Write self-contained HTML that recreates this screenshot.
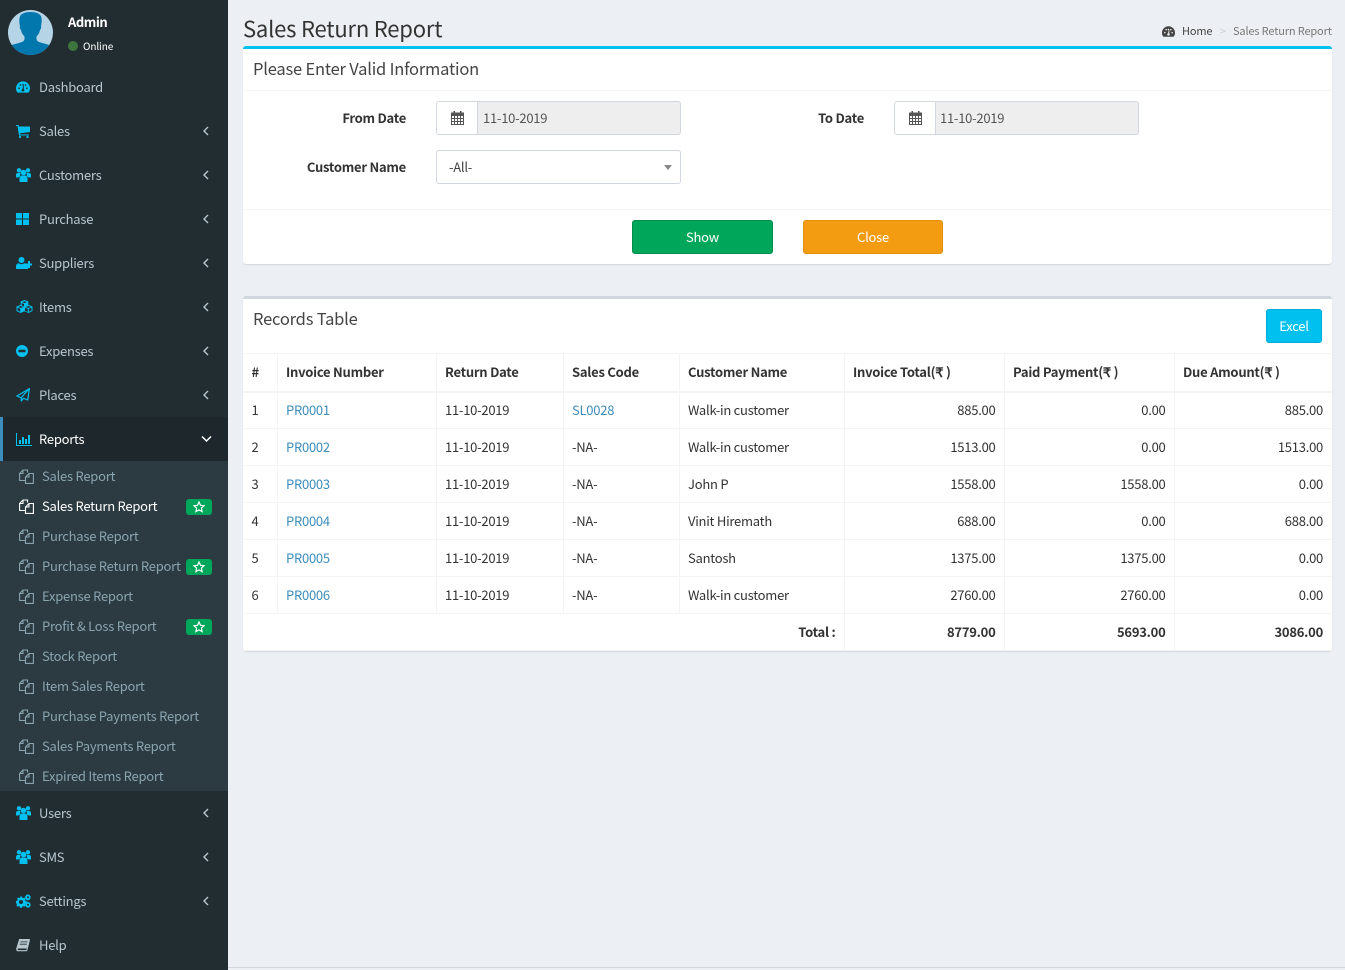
<!DOCTYPE html>
<html lang="en"><head><meta charset="utf-8"><title>Sales Return Report</title>
<style>
*{box-sizing:border-box}
html,body{margin:0;padding:0;width:1345px;height:970px;overflow:hidden;background:#ecf0f5}
body{position:relative;font-family:"Noto Sans CJK SC","Liberation Sans",sans-serif;font-size:13px;letter-spacing:-.25px;color:#333}
a{text-decoration:none}
.abs,.m,.s,.ic,.ch,.badge{position:absolute}
#side{position:absolute;left:0;top:0;width:228px;height:970px;background:#222d32}
.m{left:39px;line-height:20px;height:20px;color:#b8c7ce;white-space:nowrap}
.s{left:42px;line-height:20px;height:20px;color:#8aa4af;white-space:nowrap}
.ic{fill:#00c0ef}
.ch{left:202px;width:8px;height:10px;fill:none;stroke:#b8c7ce;stroke-width:1.4}
.sf{left:19px;width:15px;height:15px;fill:none;stroke:#8aa4af;stroke-width:1.1}
.badge{left:186px;width:26px;height:16px;background:#00a65a;border-radius:3px}
.badge svg{position:absolute;left:7px;top:2px;width:12px;height:12px;fill:none;stroke:#fff;stroke-width:1.2}
.t{position:absolute;white-space:nowrap;line-height:20px;height:20px}
.card{position:absolute;left:243px;width:1089px;background:#fff;border-radius:3px;box-shadow:0 1px 1px rgba(0,0,0,.1)}
.hl{position:absolute;left:243px;width:1089px;height:1px;background:#f4f4f4}
.lbl{position:absolute;font-weight:700;text-align:right;line-height:20px;color:#333;white-space:nowrap}
.grp{position:absolute;height:34px;width:245px;border:1px solid #d2d6de;border-radius:3px;background:#eee;color:#555;line-height:32px}
.grp i{position:absolute;left:0;top:0;width:41px;height:32px;background:#fff;border-right:1px solid #d2d6de;border-radius:2px 0 0 2px}
.grp svg{position:absolute;left:14px;top:9px;width:13px;height:14px;fill:#555}
.grp span{position:absolute;left:46px;top:0}
.btn{position:absolute;height:34px;color:#fff;text-align:center;line-height:32px;border-radius:3px;border:1px solid}
table{position:absolute;left:243px;top:353px;width:1089px;border-collapse:collapse;table-layout:fixed;color:#333;line-height:20px}
td,th{border:1px solid #f4f4f4;padding:0 8px 0 8.5px;height:37px;font-weight:400;text-align:left;white-space:nowrap;overflow:hidden}
th{font-weight:700;border-bottom-width:2px;height:38px}
tr>*:first-child{border-left:0}tr>*:last-child{border-right:0;padding-right:9px}
.r{text-align:right}.b{font-weight:700}
td a{color:#3c8dbc}
</style></head><body>
<svg width="0" height="0" style="position:absolute">
<defs>
<symbol id="gauge" viewBox="0 0 15 12"><path fill-rule="evenodd" d="M7.5 0C3.4 0 0 3.3 0 7.4c0 1.7.5 3.200 1.400 4.400.2.100.4.200.6.200h11c.2 0 .4-.1.600-.2.900-1.200 1.400-2.700 1.400-4.400C15 3.300 11.600 0 7.500 0zM3.300 8.200a.9.900 0 1 1 0-1.800.9.900 0 0 1 0 1.800zm1.500-3.400a.9.900 0 1 1 0-1.800.9.900 0 0 1 0 1.800zm3.600-1.100a.9.900 0 1 1-1.800 0 .9.900 0 0 1 1.800 0zM7.500 10.800a1.400 1.400 0 0 1-.6-2.700l.9-3.400h.8l-.3 3.500a1.400 1.400 0 0 1-.8 2.600zm2.700-6a.9.900 0 1 1 0-1.800.9.900 0 0 1 0 1.800zm1.500 3.400a.9.900 0 1 1 0-1.800.9.900 0 0 1 0 1.800z"/></symbol>
<symbol id="cart" viewBox="0 0 14 13"><path d="M0 0h2.500l.5 1.500H14v5.500L4 8.200l.3 1.300H13v1H3L1.500 1H0z"/><circle cx="4" cy="12" r="1.100"/><circle cx="11.500" cy="12" r="1.100"/></symbol>
<symbol id="users" viewBox="0 0 15 14"><circle cx="3" cy="2.300" r="2.200"/><circle cx="12" cy="2.300" r="2.200"/><circle cx="7.500" cy="4.500" r="2.800"/><path d="M0 9.500V6.500C0 5.500 1 5 2 5H4.500L4 8.500C3 9 2.800 9.300 2.500 9.500zM15 9.500V6.500C15 5.500 14 5 13 5H10.500L11 8.500C12 9 12.200 9.300 12.500 9.500zM3.500 14V10.500C3.500 8.500 5 7.500 6 7.500H9C10 7.500 11.500 8.500 11.500 10.500V14z"/></symbol>
<symbol id="grid" viewBox="0 0 13 12"><path d="M0 0h6v5.500H0zM7 0h6v5.500H7zM0 6.500h6V12H0zM7 6.500h6V12H7z"/></symbol>
<symbol id="uplus" viewBox="0 0 16 12"><circle cx="5.500" cy="3" r="3"/><path d="M0 12V9.500C0 7.500 1.300 6.300 2.800 6.300c.7.500 1.700.900 2.700.900s2-.4 2.700-.9c.7 0 1.400.3 1.900.8v1.400h2V12zM12 4h2v2.500h2v2h-2V11h-2V8.500H9.500v-2H12z"/></symbol>
<symbol id="cubes" viewBox="0 0 17 14"><path d="M8.500 0l3.800 1.400v3.400L16.500 6.500V11L12.500 13l-4-1.700L4.500 13 .5 11V6.500L4.700 4.800V1.400zM8.500 1.200L6 2.100l2.500.9 2.500-.9zM5.700 3v2.500L8 6.500V4zM4.700 6L2 7l2.700 1 2.600-1zM1.500 7.800v2.600l2.700 1.300V8.800zM12.300 6L9.700 7l2.600 1L15 7zM9 7.800v3l2.800 1.100V8.800zM15.500 7.800l-2.700 1v3l2.700-1.300z" fill-rule="evenodd"/></symbol>
<symbol id="minus" viewBox="0 0 12 12"><path fill-rule="evenodd" d="M6 0a6 6 0 1 1 0 12A6 6 0 0 1 6 0zM2.500 4.800v2.400h7V4.800z"/></symbol>
<symbol id="plane" viewBox="0 0 14 14"><path fill="none" stroke="#00c0ef" stroke-width="1.200" stroke-linejoin="round" d="M13.400.6L.8 8 5 9.800 13.400.6 11.700 12 7.500 10.200 5.300 13V9.800"/></symbol>
<symbol id="bars" viewBox="0 0 16 13"><path d="M0 0h1v12h15v1H0zM3 7h2v4H3zM6 4h2v7H6zM9 6h2v5H9zM12 2h2v9h-2z"/></symbol>
<symbol id="cogs" viewBox="0 0 15 14"><path fill-rule="evenodd" d="M4 2.500h2l.3 1.200.9.400 1.100-.6 1.300 1.300-.6 1.100.4.900 1.200.3v2l-1.200.3-.4.900.6 1.100-1.300 1.300-1.100-.6-.9.400-.3 1.200H4l-.3-1.200-.9-.4-1.100.6L.4 11.500l.6-1.100-.4-.9L0 9V7l1.200-.3.4-.9L1 4.700 2.300 3.400l1.100.6.900-.4zM5 6a2 2 0 1 0 0 4 2 2 0 0 0 0-4z"/><path fill-rule="evenodd" d="M12 0l.5.800h1l.4 1 .9.600-.4 1 .4 1-.9.500-.4 1h-1L12 6.700l-.8-.8h-1l-.4-1-.8-.5.300-1-.3-1 .8-.6.400-1h1zM12 2.300a1 1 0 1 0 0 2 1 1 0 0 0 0-2z"/><path fill-rule="evenodd" d="M12 7.500l.5.800h1l.4 1 .9.600-.4 1 .4 1-.9.500-.4 1h-1L12 14l-.8-.8h-1l-.4-1-.8-.5.300-1-.3-1 .8-.6.400-1h1zM12 9.800a1 1 0 1 0 0 2 1 1 0 0 0 0-2z"/></symbol>
<symbol id="book" viewBox="0 0 14 13"><path fill-rule="evenodd" d="M3 0h10.500l.5.700L11.500 11c-.2.800-.7 1.300-1.500 1.300H2c-1 0-1.800-.9-1.800-2.100 0-.3 0-.6.100-.9L3 .5zM4.500 2.500l-.2.800h7l.2-.8zM3.900 4.800l-.2.800h7l.2-.8zM2.500 9.500c-.6 0-.9.400-.9.800 0 .5.400.8.900.8H10c.3 0 .5-.2.600-.5l.3-1.100z"/></symbol>
<symbol id="cal" viewBox="0 0 13 14"><path fill-rule="evenodd" d="M2.500 0h1.500v1.500h5V0h1.500v1.500H13V14H0V1.500h2.500zM1 5v2h2V5zM4 5v2h2V5zM7 5v2h2V5zM10 5v2h2V5zM1 8v2h2V8zM4 8v2h2V8zM7 8v2h2V8zM10 8v2h2V8zM1 11v2h2v-2zM4 11v2h2v-2zM7 11v2h2v-2zM10 11v2h2v-2z"/></symbol>
<symbol id="files" viewBox="0 0 15 15"><path d="M8.500 3.500V1H4L.6 4.500V11.500H6.500M4 1.200V4.500H.6"/><path d="M6.500 8L10 4.500H14.400V14.400H6.500zM10 4.500V8H6.500"/></symbol>
<symbol id="star" viewBox="0 0 12 12"><path d="M6 1l1.500 3.300 3.500.4-2.600 2.400.7 3.500L6 8.900 2.900 10.600l.7-3.500L1 4.700l3.500-.4z"/></symbol>
<symbol id="left" viewBox="0 0 8 10"><path d="M6 1L2 5l4 4"/></symbol>
</defs></svg>

<div id="side">
<svg class="abs" style="left:8px;top:10px" width="45" height="45" viewBox="0 0 45 45"><defs><clipPath id="av"><circle cx="22.500" cy="22.500" r="22.500"/></clipPath></defs><g clip-path="url(#av)"><rect width="45" height="45" fill="#b5d5e6"/><path fill="#0277ae" d="M22.500 2C28 2 33 3.500 33.500 8C34 11 33.500 14 33 16C33.500 17 33 19 32 20C31.500 23 30 25 28.500 26.500C28.300 29 28.500 31 31 32C35 33.500 41 34.500 44 36L46 46L-1 46L1 36C4 34.500 10 33.500 14 32C16.500 31 16.700 29 16.500 26.500C15 25 13.500 23 13 20C12 19 11.500 17 12 16C11.500 14 11 11 11.500 8C12 3.500 17 2 22.500 2z"/></g></svg>
<div class="t" style="left:68px;top:12px;color:#fff;font-weight:700;letter-spacing:-.45px">Admin</div>
<div class="abs" style="left:68px;top:41px;width:10px;height:10px;border-radius:50%;background:#3c763d"></div>
<div class="t" style="left:83px;top:36px;color:#fff;font-size:10px;letter-spacing:-.1px">Online</div>

<svg class="ic" style="left:16px;top:81px" width="14" height="12"><use href="#gauge"/></svg><div class="m" style="top:77px">Dashboard</div>
<svg class="ic" style="left:16px;top:125px" width="14" height="13"><use href="#cart"/></svg><div class="m" style="top:121px">Sales</div><svg class="ch" style="top:126px"><use href="#left"/></svg>
<svg class="ic" style="left:16px;top:168px" width="15" height="14"><use href="#users"/></svg><div class="m" style="top:165px">Customers</div><svg class="ch" style="top:170px"><use href="#left"/></svg>
<svg class="ic" style="left:16px;top:213px" width="13" height="12"><use href="#grid"/></svg><div class="m" style="top:209px">Purchase</div><svg class="ch" style="top:214px"><use href="#left"/></svg>
<svg class="ic" style="left:16px;top:257px" width="16" height="12"><use href="#uplus"/></svg><div class="m" style="top:253px">Suppliers</div><svg class="ch" style="top:258px"><use href="#left"/></svg>
<svg class="ic" style="left:16px;top:300px" width="17" height="14"><use href="#cubes"/></svg><div class="m" style="top:297px">Items</div><svg class="ch" style="top:302px"><use href="#left"/></svg>
<svg class="ic" style="left:16px;top:345px" width="12" height="12"><use href="#minus"/></svg><div class="m" style="top:341px">Expenses</div><svg class="ch" style="top:346px"><use href="#left"/></svg>
<svg class="ic" style="left:16px;top:388px" width="14" height="14"><use href="#plane"/></svg><div class="m" style="top:385px">Places</div><svg class="ch" style="top:390px"><use href="#left"/></svg>

<div class="abs" style="left:0;top:417px;width:228px;height:44px;background:#1e282c;border-left:3px solid #3c8dbc"></div>
<svg class="ic" style="left:16px;top:433px" width="16" height="13"><use href="#bars"/></svg><div class="m" style="top:429px;color:#fff">Reports</div>
<svg class="abs" style="left:201px;top:435px" width="11" height="8" fill="none" stroke="#fff" stroke-width="1.500"><path d="M1 1.500l4.500 4.500L10 1.500"/></svg>

<div class="abs" style="left:0;top:461px;width:228px;height:330px;background:#2c3b41"></div>
<svg class="abs sf" style="top:469px"><use href="#files"/></svg><div class="s" style="top:466px">Sales Report</div>
<svg class="abs sf" style="top:499px;stroke:#fff"><use href="#files"/></svg><div class="s" style="top:496px;color:#fff">Sales Return Report</div><div class="badge" style="top:499px"><svg><use href="#star"/></svg></div>
<svg class="abs sf" style="top:529px"><use href="#files"/></svg><div class="s" style="top:526px">Purchase Report</div>
<svg class="abs sf" style="top:559px"><use href="#files"/></svg><div class="s" style="top:556px">Purchase Return Report</div><div class="badge" style="top:559px"><svg><use href="#star"/></svg></div>
<svg class="abs sf" style="top:589px"><use href="#files"/></svg><div class="s" style="top:586px">Expense Report</div>
<svg class="abs sf" style="top:619px"><use href="#files"/></svg><div class="s" style="top:616px">Profit &amp; Loss Report</div><div class="badge" style="top:619px"><svg><use href="#star"/></svg></div>
<svg class="abs sf" style="top:649px"><use href="#files"/></svg><div class="s" style="top:646px">Stock Report</div>
<svg class="abs sf" style="top:679px"><use href="#files"/></svg><div class="s" style="top:676px">Item Sales Report</div>
<svg class="abs sf" style="top:709px"><use href="#files"/></svg><div class="s" style="top:706px">Purchase Payments Report</div>
<svg class="abs sf" style="top:739px"><use href="#files"/></svg><div class="s" style="top:736px">Sales Payments Report</div>
<svg class="abs sf" style="top:769px"><use href="#files"/></svg><div class="s" style="top:766px">Expired Items Report</div>

<svg class="ic" style="left:16px;top:806px" width="15" height="14"><use href="#users"/></svg><div class="m" style="top:803px">Users</div><svg class="ch" style="top:808px"><use href="#left"/></svg>
<svg class="ic" style="left:16px;top:850px" width="15" height="14"><use href="#users"/></svg><div class="m" style="top:847px">SMS</div><svg class="ch" style="top:852px"><use href="#left"/></svg>
<svg class="ic" style="left:16px;top:894px" width="15" height="14"><use href="#cogs"/></svg><div class="m" style="top:891px">Settings</div><svg class="ch" style="top:896px"><use href="#left"/></svg>
<svg class="ic" style="left:16px;top:939px;fill:#b8c7ce" width="14" height="13"><use href="#book"/></svg><div class="m" style="top:935px">Help</div>
</div>

<div class="t" style="left:243px;top:11px;font-size:22px;letter-spacing:-.2px;line-height:34px;height:34px">Sales Return Report</div>
<svg class="abs" style="left:1162px;top:26px;fill:#444" width="13" height="11"><use href="#gauge"/></svg>
<div class="t" style="left:1182px;top:21px;font-size:11px;letter-spacing:-.15px;color:#444">Home</div>
<div class="t" style="left:1220px;top:21px;font-size:11px;color:#ccc">&gt;</div>
<div class="t" style="left:1233px;top:21px;font-size:11px;letter-spacing:-.15px;color:#777">Sales Return Report</div>

<div class="card" style="top:46px;height:218px;border-top:3px solid #00c0ef"></div>
<div class="hl" style="top:90px"></div>
<div class="hl" style="top:209px"></div>
<div class="t" style="left:253px;top:56px;font-size:16.5px;letter-spacing:-.2px;line-height:24px;height:24px;color:#444">Please Enter Valid Information</div>
<div class="lbl" style="right:939px;top:108px">From Date</div>
<div class="grp" style="left:436px;top:101px"><i></i><svg><use href="#cal"/></svg><span>11-10-2019</span></div>
<div class="lbl" style="right:481px;top:108px">To Date</div>
<div class="grp" style="left:894px;top:101px"><i></i><svg><use href="#cal"/></svg><span style="left:45px">11-10-2019</span></div>
<div class="lbl" style="right:939px;top:157px">Customer Name</div>
<div class="grp" style="left:436px;top:150px;background:#fff;color:#444"><span style="left:12px">-All-</span><b class="abs" style="left:227px;top:14px;width:0;height:0;border-left:4px solid transparent;border-right:4px solid transparent;border-top:5px solid #888"></b></div>
<div class="btn" style="left:632px;top:220px;width:141px;background:#00a65a;border-color:#008d4c">Show</div>
<div class="btn" style="left:803px;top:220px;width:140px;background:#f39c12;border-color:#e08e0b">Close</div>

<div class="card" style="top:296px;height:355px;border-top:3px solid #d2d6de"></div>
<div class="t" style="left:253px;top:306px;font-size:16.5px;letter-spacing:-.2px;line-height:24px;height:24px;color:#444">Records Table</div>
<div class="btn" style="left:1266px;top:309px;width:56px;background:#00c0ef;border-color:#00acd6">Excel</div>

<table>
<colgroup><col style="width:34px"><col style="width:159px"><col style="width:127px"><col style="width:116px"><col style="width:165px"><col style="width:160px"><col style="width:170px"><col style="width:158px"></colgroup>
<tr><th>#</th><th>Invoice Number</th><th>Return Date</th><th>Sales Code</th><th>Customer Name</th><th>Invoice Total(₹ )</th><th>Paid Payment(₹ )</th><th>Due Amount(₹ )</th></tr>
<tr><td>1</td><td><a>PR0001</a></td><td>11-10-2019</td><td><a>SL0028</a></td><td>Walk-in customer</td><td class="r">885.00</td><td class="r">0.00</td><td class="r">885.00</td></tr>
<tr><td>2</td><td><a>PR0002</a></td><td>11-10-2019</td><td>-NA-</td><td>Walk-in customer</td><td class="r">1513.00</td><td class="r">0.00</td><td class="r">1513.00</td></tr>
<tr><td>3</td><td><a>PR0003</a></td><td>11-10-2019</td><td>-NA-</td><td>John P</td><td class="r">1558.00</td><td class="r">1558.00</td><td class="r">0.00</td></tr>
<tr><td>4</td><td><a>PR0004</a></td><td>11-10-2019</td><td>-NA-</td><td>Vinit Hiremath</td><td class="r">688.00</td><td class="r">0.00</td><td class="r">688.00</td></tr>
<tr><td>5</td><td><a>PR0005</a></td><td>11-10-2019</td><td>-NA-</td><td>Santosh</td><td class="r">1375.00</td><td class="r">1375.00</td><td class="r">0.00</td></tr>
<tr><td>6</td><td><a>PR0006</a></td><td>11-10-2019</td><td>-NA-</td><td>Walk-in customer</td><td class="r">2760.00</td><td class="r">2760.00</td><td class="r">0.00</td></tr>
<tr><td colspan="5" class="r b">Total :</td><td class="r b">8779.00</td><td class="r b">5693.00</td><td class="r b">3086.00</td></tr>
</table>

<div class="abs" style="left:228px;top:967px;width:1117px;height:1px;background:#d2d6de"></div>
</body></html>
